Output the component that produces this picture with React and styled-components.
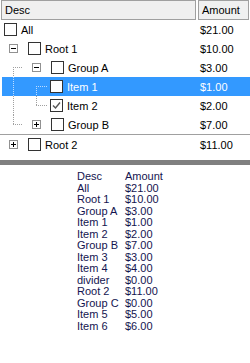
import React from "react";
import styled, { createGlobalStyle } from "styled-components";

const GlobalStyle = createGlobalStyle`
  html, body {
    margin: 0;
    padding: 0;
    background: #ffffff;
  }
  body {
    font-family: "Liberation Sans", Arial, sans-serif;
    font-size: 11px;
    color: #000000;
  }
`;

const Page = styled.div`
  width: 250px;
  height: 363px;
  display: flex;
  flex-direction: column;
  overflow: hidden;
`;

const TreePanel = styled.div`
  height: 160px;
  display: flex;
  flex-direction: column;
`;

const Header = styled.div`
  display: flex;
  height: 20px;
  padding: 0 1px;
  gap: 2px;
`;

const HeaderCell = styled.div`
  box-sizing: border-box;
  width: ${(p) => (p.grow ? "auto" : `${p.w}px`)};
  flex: ${(p) => (p.grow ? 1 : "none")};
  border: 1px solid #a0a0a0;
  background: #f0f0f0;
  display: flex;
  align-items: center;
  padding-left: 3px;
`;

const Body = styled.div`
  display: flex;
  flex-direction: column;
  padding-left: 2px;
`;

const Row = styled.div`
  display: flex;
  height: 19px;
  align-items: center;
  background: ${(p) => (p.selected ? "#3399ff" : "transparent")};
  color: ${(p) => (p.selected ? "#ffffff" : "#000000")};
`;

const DescCell = styled.div`
  width: 195px;
  height: 100%;
  display: flex;
  align-items: center;
  padding-left: ${(p) => p.pad || 0}px;
  box-sizing: border-box;
`;

const AmountCell = styled.div`
  flex: 1;
  padding-left: 3px;
`;

const Label = styled.span`
  margin-left: 4px;
  white-space: nowrap;
`;

const Separator = styled.div`
  height: 1px;
  background: #a0a0a0;
  margin-left: -2px;
`;

const Splitter = styled.div`
  height: 5px;
  background: #808080;
`;

const Output = styled.div`
  display: grid;
  grid-template-columns: 48px auto;
  padding: 6px 0 0 77px;
  line-height: 11.5px;
  color: #141450;
`;

const Expander = ({ open }) => (
  <svg width="9" height="9" style={{ marginRight: 10, flex: "none" }}>
    <rect x="0.5" y="0.5" width="8" height="8" fill="#fff" stroke="#919191" />
    <line x1="2" y1="4.5" x2="7" y2="4.5" stroke="#000" />
    {!open && <line x1="4.5" y1="2" x2="4.5" y2="7" stroke="#000" />}
  </svg>
);

const Check = ({ checked }) => (
  <svg width="13" height="13" style={{ flex: "none" }}>
    <rect x="0.5" y="0.5" width="12" height="12" fill="#fff" stroke="#333" />
    {checked && (
      <path d="M3 6.5 L5.5 9 L10 3.5" fill="none" stroke="#555" strokeWidth="1.4" />
    )}
  </svg>
);

// tree connector lines: vert are [x, y1, y2], stubs are [x1, x2] at row middle
const Guides = ({ width, vert = [], stubs = [], light }) => (
  <svg width={width} height="19" style={{ flex: "none" }}>
    {vert.map(([x, y1, y2], i) => (
      <line
        key={"v" + i}
        x1={x + 0.5}
        y1={y1}
        x2={x + 0.5}
        y2={y2}
        stroke={light ? "#bcdcff" : "#a0a0a0"}
        strokeDasharray="1 1"
      />
    ))}
    {stubs.map(([x1, x2], i) => (
      <line
        key={"h" + i}
        x1={x1}
        y1="9.5"
        x2={x2}
        y2="9.5"
        stroke={light ? "#bcdcff" : "#a0a0a0"}
        strokeDasharray="1 1"
      />
    ))}
  </svg>
);

const output = [
  ["Desc", "Amount"],
  ["All", "$21.00"],
  ["Root 1", "$10.00"],
  ["Group A", "$3.00"],
  ["Item 1", "$1.00"],
  ["Item 2", "$2.00"],
  ["Group B", "$7.00"],
  ["Item 3", "$3.00"],
  ["Item 4", "$4.00"],
  ["divider", "$0.00"],
  ["Root 2", "$11.00"],
  ["Group C", "$0.00"],
  ["Item 5", "$5.00"],
  ["Item 6", "$6.00"],
];

export default function App() {
  return (
    <>
      <GlobalStyle />
      <Page>
        <TreePanel>
          <Header>
            <HeaderCell w={195}>Desc</HeaderCell>
            <HeaderCell grow>Amount</HeaderCell>
          </Header>
          <Body>
            <Row>
              <DescCell pad={2}>
                <Check />
                <Label>All</Label>
              </DescCell>
              <AmountCell>$21.00</AmountCell>
            </Row>
            <Row>
              <DescCell pad={7}>
                <Expander open />
                <Check />
                <Label>Root 1</Label>
              </DescCell>
              <AmountCell>$10.00</AmountCell>
            </Row>
            <Row>
              <DescCell>
                <Guides width={30} vert={[[11, 9, 19]]} stubs={[[11, 20]]} />
                <Expander open />
                <Check />
                <Label>Group A</Label>
              </DescCell>
              <AmountCell>$3.00</AmountCell>
            </Row>
            <Row selected>
              <DescCell>
                <Guides
                  width={48}
                  light
                  vert={[
                    [11, 0, 19],
                    [34, 9, 19],
                  ]}
                  stubs={[[34, 45]]}
                />
                <Check />
                <Label>Item 1</Label>
              </DescCell>
              <AmountCell>$1.00</AmountCell>
            </Row>
            <Row>
              <DescCell>
                <Guides
                  width={48}
                  vert={[
                    [11, 0, 19],
                    [34, 0, 10],
                  ]}
                  stubs={[[34, 45]]}
                />
                <Check checked />
                <Label>Item 2</Label>
              </DescCell>
              <AmountCell>$2.00</AmountCell>
            </Row>
            <Row>
              <DescCell>
                <Guides width={30} vert={[[11, 0, 10]]} stubs={[[11, 20]]} />
                <Expander />
                <Check />
                <Label>Group B</Label>
              </DescCell>
              <AmountCell>$7.00</AmountCell>
            </Row>
            <Separator />
            <Row>
              <DescCell pad={7}>
                <Expander />
                <Check />
                <Label>Root 2</Label>
              </DescCell>
              <AmountCell>$11.00</AmountCell>
            </Row>
          </Body>
        </TreePanel>
        <Splitter />
        <Output>
          {output.map(([d, a]) => (
            <React.Fragment key={d}>
              <span>{d}</span>
              <span>{a}</span>
            </React.Fragment>
          ))}
        </Output>
      </Page>
    </>
  );
}
